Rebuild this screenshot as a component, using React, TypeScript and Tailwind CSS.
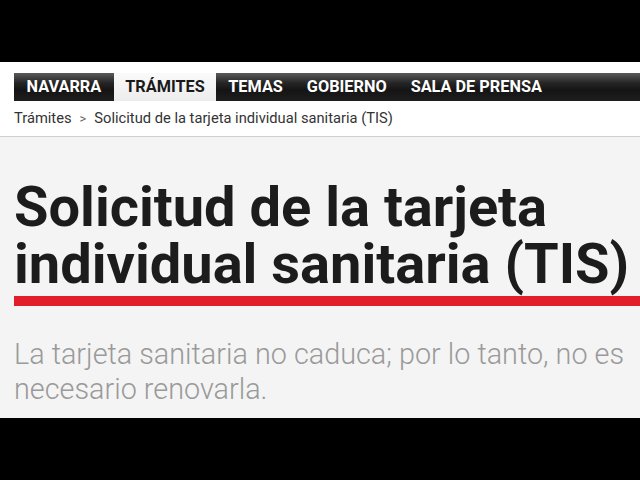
export default function App() {
  const nav = ["TEMAS", "GOBIERNO", "SALA DE PRENSA"];
  return (
    <div className="flex h-[480px] w-[640px] flex-col overflow-hidden bg-black font-['Roboto',sans-serif]">
      <div className="h-[62px] shrink-0 bg-black" />
      <div className="flex h-[356px] shrink-0 flex-col overflow-hidden bg-white">
        <nav className="ml-[14px] mt-[11px] flex h-[28px] shrink-0 items-stretch bg-[linear-gradient(to_bottom,#5a5a5a_0%,#262626_35%,#141414_60%,#1e1e1e_100%)]">
          <span className="flex items-center px-[12.5px] text-[16.3px] font-bold text-white">NAVARRA</span>
          <span className="flex items-center bg-[linear-gradient(to_bottom,#fafafa,#ececec)] px-[11.5px] text-[16.3px] font-bold text-[#1a1a1a]">
            TRÁMITES
          </span>
          {nav.map((item) => (
            <span key={item} className="flex items-center px-[12px] text-[16.3px] font-bold text-white">
              {item}
            </span>
          ))}
        </nav>
        <div className="flex h-[36px] shrink-0 items-center border-b border-[#cfcfcf] pl-[14px] text-[14.7px] text-[#333]">
          <span>Trámites</span>
          <span className="mx-[8px] text-[13px] text-[#666]">&gt;</span>
          <span>Solicitud de la tarjeta individual sanitaria (TIS)</span>
        </div>
        <div className="flex flex-1 flex-col bg-[#f4f4f4]">
          <h1 className="mt-[42px] whitespace-nowrap pl-[14px] text-[56px] font-bold leading-[57px] text-[#1c1c1c]">
            Solicitud de la tarjeta
            <br />
            individual sanitaria (TIS)
          </h1>
          <div className="ml-[14px] mt-[3px] h-[10px] shrink-0 bg-[#e31e2b]" />
          <p className="mt-[31px] whitespace-nowrap pl-[14px] text-[28.8px] font-light leading-[35px] text-[#9a9a9a]">
            La tarjeta sanitaria no caduca; por lo tanto, no es
            <br />
            necesario renovarla.
          </p>
        </div>
      </div>
      <div className="flex-1 bg-black" />
    </div>
  );
}
